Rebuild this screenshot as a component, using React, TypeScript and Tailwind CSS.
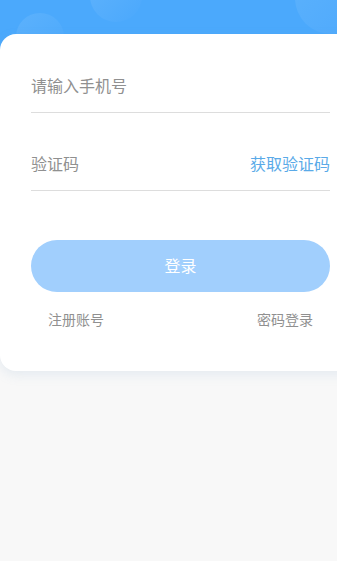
import React, { useState } from 'react';

const App: React.FC = () => {
  const [phone, setPhone] = useState('');
  const [code, setCode] = useState('');

  return (
    <div
      className="relative min-h-[561px] w-full overflow-hidden bg-[#f8f8f8]"
      style={{ fontFamily: '"Noto Sans CJK SC", "Noto Sans", sans-serif' }}
    >
      {/* header */}
      <div className="relative h-[60px] overflow-hidden bg-[#4ba9fc]">
        <div className="absolute left-[90px] top-[-30px] h-[52px] w-[52px] rounded-full bg-gradient-to-br from-[#62b4fc] to-[#4aa8fc] opacity-90" />
        <div className="absolute left-[16px] top-[13px] h-[48px] w-[48px] rounded-full bg-gradient-to-br from-[#5cb1fc] to-[#4ba9fc]" />
        <div className="absolute left-[295px] top-[-38px] h-[72px] w-[72px] rounded-full bg-gradient-to-br from-[#5cb2fc] to-[#4ea9fc]" />
      </div>

      {/* card */}
      <div className="relative -mt-[26px] mr-[-24px] rounded-l-[16px] bg-white pb-[42px] pl-[31px] pr-[31px] pt-[27px] shadow-[0_4px_12px_rgba(120,160,200,0.15)]">
        <div className="flex h-[52px] items-center border-b border-[#dddddd] pb-[4px]">
          <input
            value={phone}
            onChange={e => setPhone(e.target.value)}
            placeholder="请输入手机号"
            className="w-full bg-transparent text-[16px] text-[#333] outline-none placeholder:text-[#909090]"
          />
        </div>
        <div className="mt-[26px] flex h-[52px] items-center border-b border-[#dddddd] pb-[4px]">
          <input
            value={code}
            onChange={e => setCode(e.target.value)}
            placeholder="验证码"
            className="min-w-0 flex-1 bg-transparent text-[16px] text-[#333] outline-none placeholder:text-[#909090]"
          />
          <span className="shrink-0 text-[16px] text-[#5aaae8]">获取验证码</span>
        </div>

        <button className="mt-[49px] flex h-[52px] w-full items-center justify-center rounded-full bg-[#a1cffd] pb-[2px] text-[16px] text-white">
          登录
        </button>

        <div className="mt-[17px] flex items-center justify-between px-[17px] text-[14px] leading-[20px] text-[#909090]">
          <span>注册账号</span>
          <span>密码登录</span>
        </div>
      </div>
    </div>
  );
};

export default App;
